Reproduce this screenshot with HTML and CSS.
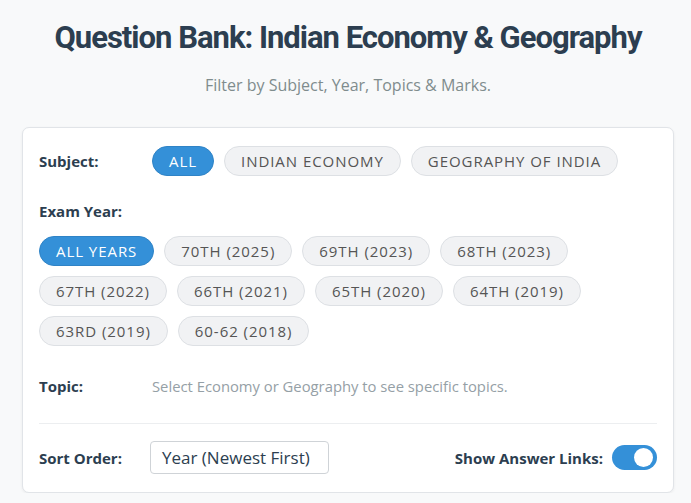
FILE: index.html
```html
<!DOCTYPE html>
<html lang="en">
<head>
<meta charset="utf-8">
<title>Question Bank</title>
<link rel="stylesheet" href="styles.css">
</head>
<body>
<div class="page">
  <header class="header">
    <h1 class="title">Question Bank: Indian Economy &amp; Geography</h1>
    <p class="subtitle">Filter by Subject, Year, Topics &amp; Marks.</p>
  </header>
  <section class="card">
    <div class="row">
      <span class="label">Subject:</span>
      <div class="chips">
        <button class="chip active">ALL</button>
        <button class="chip">INDIAN ECONOMY</button>
        <button class="chip">GEOGRAPHY OF INDIA</button>
      </div>
    </div>
    <div class="stack">
      <span class="label">Exam Year:</span>
      <div class="chips wrap">
        <button class="chip active">ALL YEARS</button>
        <button class="chip">70TH (2025)</button>
        <button class="chip">69TH (2023)</button>
        <button class="chip">68TH (2023)</button>
        <button class="chip">67TH (2022)</button>
        <button class="chip">66TH (2021)</button>
        <button class="chip">65TH (2020)</button>
        <button class="chip">64TH (2019)</button>
        <button class="chip">63RD (2019)</button>
        <button class="chip">60-62 (2018)</button>
      </div>
    </div>
    <div class="row topic-row">
      <span class="label">Topic:</span>
      <span class="hint">Select Economy or Geography to see specific topics.</span>
    </div>
    <div class="footer">
      <div class="sort">
        <span class="label">Sort Order:</span>
        <div class="select">Year (Newest First)</div>
      </div>
      <div class="toggle-wrap">
        <span class="label">Show Answer Links:</span>
        <span class="toggle"><span class="knob"></span></span>
      </div>
    </div>
  </section>
</div>
</body>
</html>
```

FILE: styles.css
```css
* { box-sizing: border-box; }
html, body { margin: 0; padding: 0; }
body {
  background: #f8f9fa;
  font-family: "Open Sans", "Noto Sans", sans-serif;
  color: #2c3e50;
}
.page {
  padding: 0 17px 0 22px;
}
.header {
  text-align: center;
  padding-top: 16px;
}
.title {
  margin: 0;
  font-family: Roboto, sans-serif;
  font-weight: 700;
  font-size: 31px;
  letter-spacing: -1px;
  line-height: 44px;
  color: #2c3e50;
}
.subtitle {
  margin: 14px 0 0;
  font-size: 16px;
  line-height: 22px;
  color: #7f8c8d;
}
.card {
  margin-top: 31px;
  background: #fff;
  border: 1px solid #e1e4e8;
  border-radius: 7px;
  box-shadow: 0 1px 3px rgba(0,0,0,0.06);
  padding: 18px 16px 18px 16px;
  width: 652px;
}
.row {
  display: flex;
  align-items: center;
}
.label {
  font-weight: 700;
  font-size: 15px;
  color: #2c3e50;
  white-space: nowrap;
}
.row > .label { width: 113px; flex: none; }
.chips {
  display: flex;
  gap: 10px;
}
.chips.wrap { flex-wrap: wrap; width: 560px; row-gap: 10px; }
.chip {
  height: 30px;
  padding: 0 16px;
  border-radius: 15px;
  border: 1px solid #dde0e4;
  background: #f1f2f4;
  color: #555;
  font-family: "Open Sans", sans-serif;
  font-size: 15px;
  letter-spacing: 0.95px;
  cursor: pointer;
}
.chip.active {
  background: #3490d8;
  border-color: #2f83c6;
  color: #fff;
}
.stack {
  margin-top: 25px;
  display: flex;
  flex-direction: column;
  gap: 15px;
}
.topic-row {
  margin-top: 30px;
}
.hint {
  font-size: 14.8px;
  color: #95a0a6;
}
.footer {
  margin-top: 27px;
  border-top: 1px solid #eceef0;
  padding-top: 17px;
  display: flex;
  align-items: center;
  justify-content: space-between;
}
.sort, .toggle-wrap {
  display: flex;
  align-items: center;
}
.sort .label { width: 111px; }
.select {
  width: 179px;
  height: 33px;
  border: 1px solid #cfd3d7;
  border-radius: 4px;
  padding: 0 11px;
  font-size: 17px;
  line-height: 31px;
  color: #2c3e50;
}
.toggle-wrap .label { margin-right: 9px; }
.toggle {
  position: relative;
  width: 45px;
  height: 25px;
  border-radius: 13px;
  background: #3490d8;
}
.knob {
  position: absolute;
  top: 3px;
  right: 4px;
  width: 19px;
  height: 19px;
  border-radius: 50%;
  background: #fff;
}
```
